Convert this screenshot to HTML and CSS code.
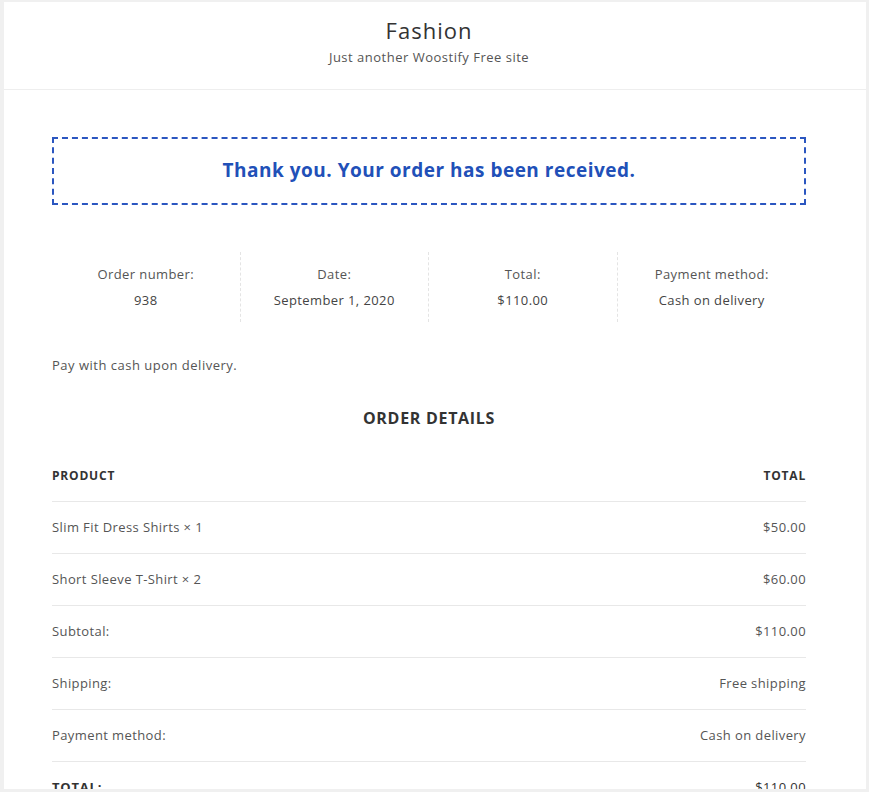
FILE: index.html
```html
<!DOCTYPE html>
<html>
<head>
<meta charset="utf-8">
<link rel="stylesheet" href="styles.css">
</head>
<body>
<div class="page">
  <header class="site-header">
    <div class="site-title">Fashion</div>
    <div class="site-desc">Just another Woostify Free site</div>
  </header>
  <main class="content">
    <div class="notice">Thank you. Your order has been received.</div>
    <ul class="overview">
      <li><span class="ov-label">Order number:</span><span class="ov-val">938</span></li>
      <li><span class="ov-label">Date:</span><span class="ov-val">September 1, 2020</span></li>
      <li><span class="ov-label">Total:</span><span class="ov-val">$110.00</span></li>
      <li><span class="ov-label">Payment method:</span><span class="ov-val">Cash on delivery</span></li>
    </ul>
    <p class="pay-note">Pay with cash upon delivery.</p>
    <h2 class="details-title">ORDER DETAILS</h2>
    <div class="table">
      <div class="row head"><span>PRODUCT</span><span>TOTAL</span></div>
      <div class="row"><span>Slim Fit Dress Shirts × 1</span><span>$50.00</span></div>
      <div class="row"><span>Short Sleeve T-Shirt × 2</span><span>$60.00</span></div>
      <div class="row"><span>Subtotal:</span><span>$110.00</span></div>
      <div class="row"><span>Shipping:</span><span>Free shipping</span></div>
      <div class="row"><span>Payment method:</span><span>Cash on delivery</span></div>
      <div class="row total"><span class="total-label">TOTAL:</span><span>$110.00</span></div>
    </div>
  </main>
</div>
</body>
</html>
```
FILE: styles.css
```css
html, body {
  margin: 0;
  padding: 0;
  height: 100%;
  overflow: hidden;
}
body {
  background: #f0f0f0;
  font-family: "Open Sans", "Liberation Sans", sans-serif;
  color: #555;
  padding: 2px 3px 0 4px;
  box-sizing: border-box;
  letter-spacing: 0.4px;
}
.page {
  background: #fff;
  height: 787px;
  overflow: hidden;
}
.site-header {
  height: 88px;
  border-bottom: 1px solid #eeeeee;
  display: flex;
  flex-direction: column;
  align-items: center;
  padding-right: 12px;
  box-sizing: border-box;
}
.site-title {
  font-size: 22px;
  color: #333;
  margin-top: 13px;
  line-height: 30px;
  letter-spacing: 1px;
}
.site-desc {
  font-size: 13px;
  color: #555;
  margin-top: 3px;
  line-height: 18px;
  letter-spacing: 0.5px;
}
.content {
  padding: 47px 60px 0 48px;
}
.notice {
  border: 2px dashed #2b56c0;
  height: 68px;
  padding-bottom: 2px;
  box-sizing: border-box;
  display: flex;
  align-items: center;
  justify-content: center;
  color: #2150b8;
  font-weight: 700;
  font-size: 19px;
  letter-spacing: 0.5px;
}
.overview {
  list-style: none;
  margin: 47px 0 0;
  padding: 0;
  display: grid;
  grid-template-columns: repeat(4, 1fr);
}
.overview li {
  display: flex;
  flex-direction: column;
  align-items: center;
  height: 70px;
  padding-top: 13px;
  box-sizing: border-box;
  border-right: 1px dashed #e4e4e4;
  font-size: 13px;
  color: #555;
}
.overview li:last-child { border-right: none; }
.ov-label { line-height: 18px; }
.ov-val { line-height: 18px; margin-top: 8px; color: #444; }
.pay-note {
  margin: 34px 0 0;
  font-size: 13px;
  line-height: 18px;
  color: #555;
  letter-spacing: 0.5px;
}
.details-title {
  margin: 33px 0 0;
  text-align: center;
  font-size: 16px;
  line-height: 22px;
  font-weight: 700;
  color: #333;
  letter-spacing: 0.7px;
}
.table {
  margin-top: 38px;
}
.row {
  display: flex;
  justify-content: space-between;
  align-items: center;
  height: 52px;
  padding-bottom: 2px;
  border-bottom: 1px solid #e8e8e8;
  box-sizing: border-box;
  font-size: 13px;
  color: #555;
}
.row.head {
  height: 35px;
  padding-bottom: 0;
  align-items: flex-start;
  font-weight: 700;
  font-size: 12px;
  color: #333;
  letter-spacing: 0.8px;
}
.row.head span { line-height: 18px; }
.row.total {
  color: #333;
  border-bottom: none;
}
.total-label {
  font-weight: 700;
  letter-spacing: 0.8px;
}
```
